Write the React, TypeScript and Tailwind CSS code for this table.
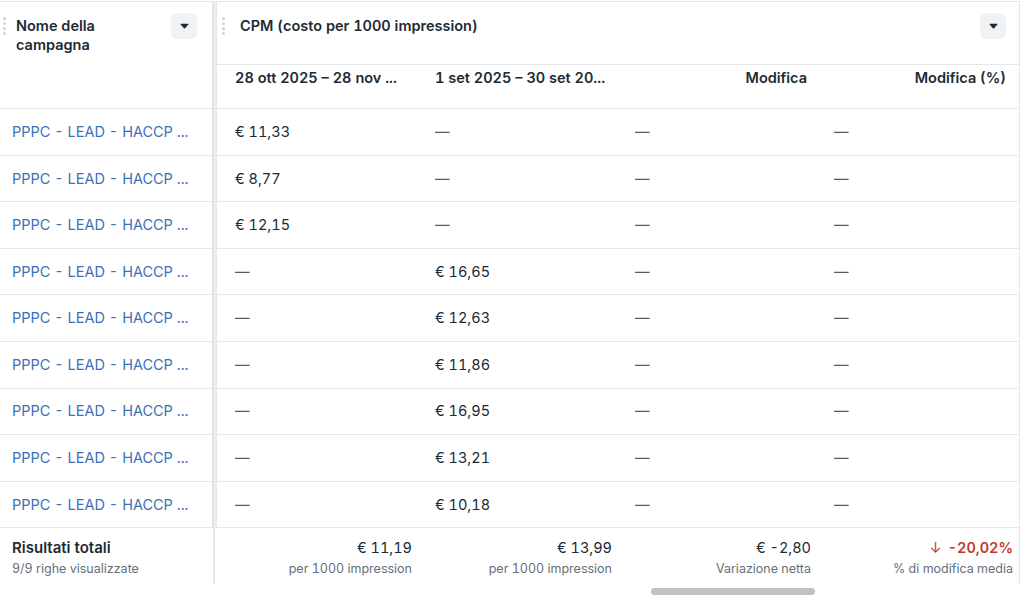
import React from 'react';

const rows: { a: string; b: string }[] = [
  { a: '€ 11,33', b: '—' },
  { a: '€ 8,77', b: '—' },
  { a: '€ 12,15', b: '—' },
  { a: '—', b: '€ 16,65' },
  { a: '—', b: '€ 12,63' },
  { a: '—', b: '€ 11,86' },
  { a: '—', b: '€ 16,95' },
  { a: '—', b: '€ 13,21' },
  { a: '—', b: '€ 10,18' },
];

const DragDots = () => (
  <div className="flex flex-col gap-[2px]">
    {[0, 1, 2, 3].map((i) => (
      <span key={i} className="block w-[3px] h-[3px] rounded-full bg-[#cfd3d7]" />
    ))}
  </div>
);

const CaretButton = () => (
  <button className="w-[26px] h-[26px] rounded-md bg-[#f1f2f4] flex items-center justify-center">
    <svg width="9" height="6" viewBox="0 0 9 6">
      <path d="M1 0.8 H8 Q8.8 0.8 8.3 1.5 L5.1 5.2 Q4.5 5.8 3.9 5.2 L0.7 1.5 Q0.2 0.8 1 0.8 Z" fill="#1c2b33" />
    </svg>
  </button>
);

const Divider = () => (
  <div className="w-[5px] shrink-0 bg-linear-to-r from-[#dedede] to-[#f3f3f3] border-r border-[#e6e6e6]" />
);

const Cell = ({ v }: { v: string }) =>
  v === '—' ? <span className="text-[#4b5d6b]">—</span> : <span>{v}</span>;

export default function App() {
  return (
    <div className="w-[1024px] h-[606px] bg-white pt-px font-['Inter',sans-serif] text-[#1c2b33] overflow-hidden tabular-nums">
      <div className="w-[1020px] border-t border-r border-[#e5e6e8]">
        {/* header */}
        <div className="flex h-[107px] border-b border-[#e5e6e8]">
          <div className="w-[212px] shrink-0 flex items-start pl-[3px] pr-[15px] pt-[11px]">
            <div className="pt-[4px]">
              <DragDots />
            </div>
            <div className="flex-1 pl-[10px] pt-[3px] text-[14.5px] font-semibold leading-[19px]">
              Nome della
              <br />
              campagna
            </div>
            <CaretButton />
          </div>
          <Divider />
          <div className="flex-1 flex flex-col">
            <div className="h-[63px] border-b border-[#e5e6e8] flex items-start pl-[5px] pr-[13px] pt-[11px]">
              <div className="pt-[4px]">
                <DragDots />
              </div>
              <div className="flex-1 pl-[15px] pt-[3px] text-[14.5px] font-semibold leading-[19px]">
                CPM (costo per 1000 impression)
              </div>
              <CaretButton />
            </div>
            <div className="flex flex-1 text-[14.5px] font-semibold leading-[19px] pt-[3px]">
              <div className="w-[203px] pl-[18px]">28 ott 2025 – 28 nov ...</div>
              <div className="w-[200px] pl-[15px]">1 set 2025 – 30 set 20...</div>
              <div className="w-[200px] pr-[13px] text-right">Modifica</div>
              <div className="flex-1 pr-[13px] text-right">Modifica (%)</div>
            </div>
          </div>
        </div>

        {/* body */}
        {rows.map((r, i) => (
          <div key={i} className="flex h-[46.6px] border-b border-[#e8e9eb] text-[14.5px]">
            <div className="w-[212px] shrink-0 flex items-center pl-[12px] text-[#3a71b8]">
              PPPC - LEAD - HACCP ...
            </div>
            <Divider />
            <div className="w-[203px] flex items-center pl-[18px]">
              <Cell v={r.a} />
            </div>
            <div className="w-[200px] flex items-center pl-[15px]">
              <Cell v={r.b} />
            </div>
            <div className="w-[200px] flex items-center pl-[15px]">
              <Cell v="—" />
            </div>
            <div className="flex-1 flex items-center pl-[14px]">
              <Cell v="—" />
            </div>
          </div>
        ))}

        {/* totals */}
        <div className="flex h-[56px]">
          <div className="w-[215px] shrink-0 pl-[12px] pt-[10px] border-r-2 border-[#e9e9e9]">
            <div className="text-[15px] font-semibold leading-[20px]">Risultati totali</div>
            <div className="text-[12.5px] leading-[17px] mt-[2px] text-[#65707a]">9/9 righe visualizzate</div>
          </div>
          <div className="w-[203px] pr-[6px] pt-[10px] text-right">
            <div className="text-[14.5px] leading-[20px]">€ 11,19</div>
            <div className="text-[12.5px] leading-[17px] mt-[2px] text-[#65707a]">per 1000 impression</div>
          </div>
          <div className="w-[200px] pr-[6px] pt-[10px] text-right">
            <div className="text-[14.5px] leading-[20px]">€ 13,99</div>
            <div className="text-[12.5px] leading-[17px] mt-[2px] text-[#65707a]">per 1000 impression</div>
          </div>
          <div className="w-[200px] pr-[7px] pt-[10px] text-right">
            <div className="text-[14.5px] leading-[20px]">€ -2,80</div>
            <div className="text-[12.5px] leading-[17px] mt-[2px] text-[#65707a]">Variazione netta</div>
          </div>
          <div className="flex-1 pr-[6px] pt-[10px] text-right">
            <div className="text-[14.5px] leading-[20px] font-semibold text-[#c2382e]">
              <span className="font-normal mr-[6px]">↓</span>-20,02%
            </div>
            <div className="text-[12.5px] leading-[17px] mt-[2px] text-[#65707a]">% di modifica media</div>
          </div>
        </div>
      </div>
      <div className="pl-[651px] pt-[4px]">
        <div className="w-[164px] h-[7px] rounded-full bg-[#c1c1c1]" />
      </div>
    </div>
  );
}
